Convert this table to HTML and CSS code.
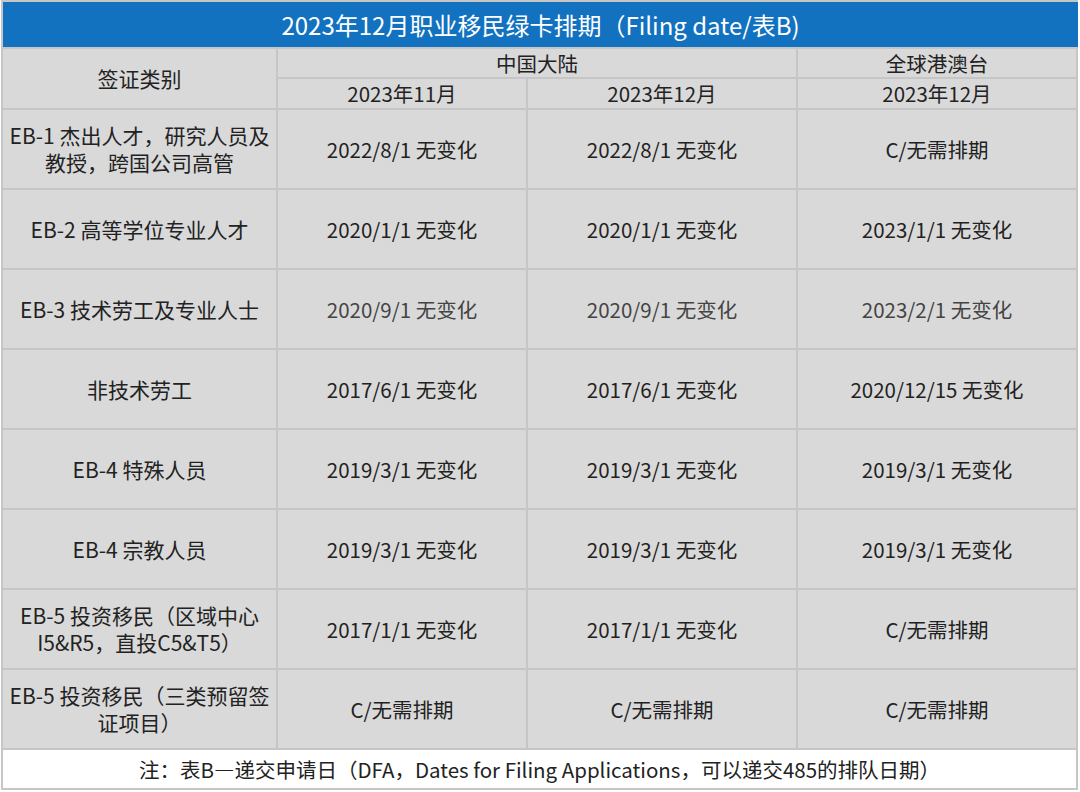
FILE: index.html
```html
<!DOCTYPE html>
<html lang="zh-CN">
<head>
<meta charset="utf-8">
<title>2023年12月职业移民绿卡排期</title>
<link rel="stylesheet" href="styles.css">
</head>
<body>
<div class="sheet">
  <div class="title">2023年12月职业移民绿卡排期（Filing date/表B)</div>

  <div class="cell head kind">签证类别</div>
  <div class="cell head region-cn">中国大陆</div>
  <div class="cell head">全球港澳台</div>
  <div class="cell head">2023年11月</div>
  <div class="cell head">2023年12月</div>
  <div class="cell head">2023年12月</div>

  <div class="cell label">EB-1 杰出人才，研究人员及<br>教授，跨国公司高管</div>
  <div class="cell">2022/8/1 无变化</div>
  <div class="cell">2022/8/1 无变化</div>
  <div class="cell">C/无需排期</div>

  <div class="cell label">EB-2 高等学位专业人才</div>
  <div class="cell">2020/1/1 无变化</div>
  <div class="cell">2020/1/1 无变化</div>
  <div class="cell">2023/1/1 无变化</div>

  <div class="cell label">EB-3 技术劳工及专业人士</div>
  <div class="cell muted">2020/9/1 无变化</div>
  <div class="cell muted">2020/9/1 无变化</div>
  <div class="cell muted">2023/2/1 无变化</div>

  <div class="cell label">非技术劳工</div>
  <div class="cell">2017/6/1 无变化</div>
  <div class="cell">2017/6/1 无变化</div>
  <div class="cell">2020/12/15 无变化</div>

  <div class="cell label">EB-4 特殊人员</div>
  <div class="cell">2019/3/1 无变化</div>
  <div class="cell">2019/3/1 无变化</div>
  <div class="cell">2019/3/1 无变化</div>

  <div class="cell label">EB-4 宗教人员</div>
  <div class="cell">2019/3/1 无变化</div>
  <div class="cell">2019/3/1 无变化</div>
  <div class="cell">2019/3/1 无变化</div>

  <div class="cell label">EB-5 投资移民（区域中心<br>I5&amp;R5，直投C5&amp;T5）</div>
  <div class="cell">2017/1/1 无变化</div>
  <div class="cell">2017/1/1 无变化</div>
  <div class="cell">C/无需排期</div>

  <div class="cell label">EB-5 投资移民（三类预留签<br>证项目）</div>
  <div class="cell">C/无需排期</div>
  <div class="cell">C/无需排期</div>
  <div class="cell">C/无需排期</div>

  <div class="note">注：表B—递交申请日（DFA，Dates for Filing Applications，可以递交485的排队日期）</div>
</div>
</body>
</html>
```

FILE: styles.css
```css
html, body {
  margin: 0;
  padding: 0;
  background: #ffffff;
}

body {
  font-family: "Noto Sans CJK SC", "Noto Sans", sans-serif;
  color: #222222;
}

.sheet {
  display: grid;
  grid-template-columns: 273px 248px 268px 278px;
  grid-template-rows: 45px 28px 29px repeat(8, 78px) 38px;
  gap: 2px;
  padding: 2px;
  margin-left: 1px;
  width: max-content;
  background: #c6c6c6;
}

.title {
  grid-column: 1 / 5;
  background: #1272bf;
  color: #ffffff;
  font-size: 24px;
  display: flex;
  align-items: center;
  justify-content: center;
  margin-right: -2px;
}

.cell {
  background: #d9d9d9;
  font-size: 20.5px;
  line-height: 27px;
  display: flex;
  align-items: center;
  justify-content: center;
  text-align: center;
}

.head {
  font-size: 20.5px;
}

.kind {
  grid-row: 2 / 4;
  font-size: 21px;
}

.region-cn {
  grid-column: 2 / 4;
}

.label {
  white-space: nowrap;
  font-size: 21px;
}

.muted {
  color: #444444;
}

.note {
  grid-column: 1 / 5;
  background: #ffffff;
  font-size: 20.5px;
  display: flex;
  align-items: center;
  justify-content: center;
}
```
